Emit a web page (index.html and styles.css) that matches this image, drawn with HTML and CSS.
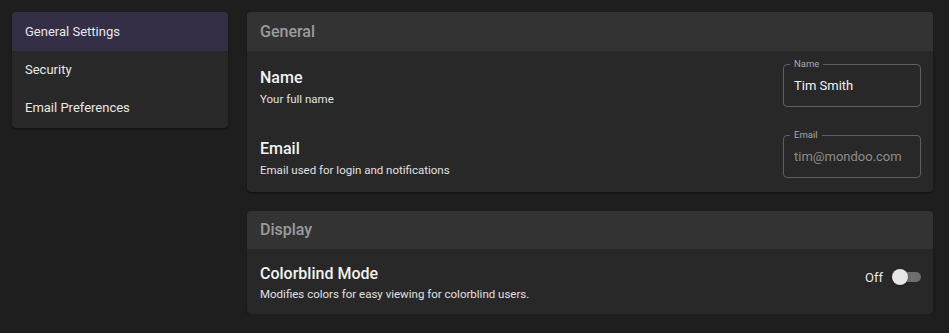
FILE: index.html
```html
<!DOCTYPE html>
<html>
<head>
<meta charset="utf-8">
<link rel="stylesheet" href="styles.css">
</head>
<body>
<div class="page">
  <nav class="sidebar">
    <div class="nav-item active">General Settings</div>
    <div class="nav-item">Security</div>
    <div class="nav-item">Email Preferences</div>
  </nav>
  <main class="content">
    <section class="card">
      <div class="card-header">General</div>
      <div class="card-body">
        <div class="row">
          <div class="row-text">
            <div class="row-title">Name</div>
            <div class="row-desc">Your full name</div>
          </div>
          <div class="field">
            <span class="field-label">Name</span>
            <span class="field-value">Tim Smith</span>
          </div>
        </div>
        <div class="row">
          <div class="row-text">
            <div class="row-title">Email</div>
            <div class="row-desc">Email used for login and notifications</div>
          </div>
          <div class="field disabled">
            <span class="field-label">Email</span>
            <span class="field-value">tim@mondoo.com</span>
          </div>
        </div>
      </div>
    </section>
    <section class="card">
      <div class="card-header short">Display</div>
      <div class="card-body compact">
        <div class="row row-toggle">
          <div class="row-text">
            <div class="row-title">Colorblind Mode</div>
            <div class="row-desc">Modifies colors for easy viewing for colorblind users.</div>
          </div>
          <div class="toggle">
            <span class="toggle-label">Off</span>
            <span class="switch"><span class="track"></span><span class="thumb"></span></span>
          </div>
        </div>
      </div>
    </section>
  </main>
</div>
</body>
</html>
```

FILE: styles.css
```css
* { box-sizing: border-box; }
html, body {
  margin: 0;
  padding: 0;
  background: #1e1e1e;
  font-family: Roboto, "Liberation Sans", sans-serif;
  color: #fff;
}
.page {
  display: flex;
  align-items: flex-start;
  padding: 12px 16px 0 12px;
  gap: 19px;
}
.sidebar {
  width: 216px;
  flex: none;
  background: #282828;
  border-radius: 4px;
  overflow: hidden;
  box-shadow: 0 1px 2px rgba(0,0,0,0.5);
  padding-bottom: 1px;
}
.nav-item {
  height: 38px;
  line-height: 38px;
  padding-left: 13px;
  font-size: 13px;
  color: #e8e8e8;
}
.nav-item.active {
  background: #342e47;
  height: 39px;
  line-height: 39px;
}
.content {
  flex: 1;
  display: flex;
  flex-direction: column;
  gap: 19px;
}
.card {
  background: #282828;
  border-radius: 4px;
  overflow: hidden;
  box-shadow: 0 1px 2px rgba(0,0,0,0.5);
}
.card-header {
  background: #333333;
  height: 39px;
  line-height: 39px;
  padding-left: 13px;
  font-size: 16px;
  font-weight: 500;
  color: #9c9c9c;
}
.card-header.short {
  height: 38px;
  line-height: 38px;
}
.card-body {
  padding: 13px 12px 14px 13px;
  display: flex;
  flex-direction: column;
  gap: 28px;
}
.card-body.compact {
  padding: 14px 12px 12px 13px;
}
.row {
  display: flex;
  justify-content: space-between;
  align-items: flex-end;
}
.row-title {
  font-size: 16px;
  font-weight: 500;
  color: #f2f2f2;
  line-height: 20px;
  padding-top: 1px;
}
.row-desc {
  font-size: 11.5px;
  color: #e0e0e0;
  line-height: 16px;
  margin-top: 3px;
}
.compact .row-desc {
  margin-top: 2px;
}
.field {
  position: relative;
  width: 138px;
  height: 43px;
  border: 1px solid #5f5f5f;
  border-radius: 4px;
  display: flex;
  align-items: center;
  padding-left: 10px;
}
.field-label {
  position: absolute;
  top: -7px;
  left: 6px;
  padding: 0 4px;
  background: #282828;
  font-size: 9.5px;
  line-height: 12px;
  color: #a8a8a8;
}
.field-value {
  font-size: 13px;
  color: #f2f2f2;
}
.field.disabled .field-value { color: #8c8c8c; }
.row-toggle { align-items: center; }
.toggle {
  display: flex;
  align-items: center;
  gap: 9px;
  margin-top: -11px;
}
.toggle-label {
  font-size: 13px;
  color: #e8e8e8;
}
.switch {
  position: relative;
  width: 29px;
  height: 16px;
  display: inline-block;
}
.track {
  position: absolute;
  left: 4px;
  right: 0;
  top: 3px;
  height: 10px;
  border-radius: 5px;
  background: #6e6e6e;
}
.thumb {
  position: absolute;
  left: 0;
  top: 0;
  width: 16px;
  height: 16px;
  border-radius: 50%;
  background: #e6e6e6;
  box-shadow: 0 1px 2px rgba(0,0,0,0.4);
}
```
